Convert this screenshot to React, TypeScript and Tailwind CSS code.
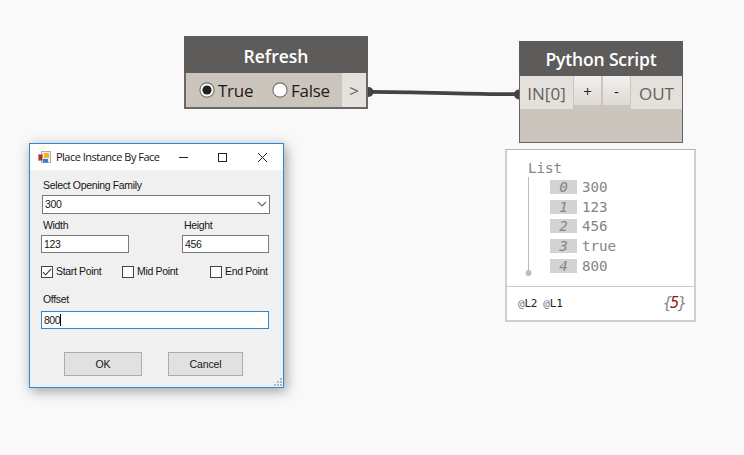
import React from "react";

const sans = "font-['Open_Sans','Noto_Sans',sans-serif]";
const mono = "font-['DejaVu_Sans_Mono',monospace]";

function Radio({ label, checked, className }: { label: string; checked?: boolean; className: string }) {
  return (
    <div className={`flex items-center ${className}`}>
      <svg width="16" height="16" viewBox="0 0 16 16" className="-mt-px shrink-0">
        <circle cx="8" cy="8" r="7.1" fill="#fff" stroke="#707070" strokeWidth="1.1" />
        {checked && <circle cx="8" cy="8" r="4.6" fill="#212121" />}
      </svg>
      <span className="ml-[3px] pt-[2px] text-[17px] leading-5 tracking-[-0.25px] text-[#1b1b1b]">{label}</span>
    </div>
  );
}

function RefreshNode() {
  return (
    <div className={`absolute left-[184px] top-[36px] flex h-[73px] w-[184px] flex-col border-2 border-t-0 border-[#6b6967] bg-[#cbc5bd] ${sans}`}>
      <div className="-mx-0.5 flex h-[37px] shrink-0 items-center justify-center bg-[#5e5c5a] pt-[3px] text-[17.5px] font-semibold text-white">Refresh</div>
      <div className="flex flex-1">
        <Radio label="True" checked className="ml-[13px] w-[73px]" />
        <Radio label="False" className="w-[70px]" />
        <div className="flex flex-1 items-center justify-center bg-[#e4e0dc] pt-0.5 text-[17px] leading-5 text-[#65625f]">&gt;</div>
      </div>
    </div>
  );
}

function PythonNode() {
  const button = "flex h-[29px] w-[27px] justify-center bg-linear-to-b from-[#f2f0ed] to-[#dedad5] pt-[5px] text-[15px] leading-5 text-[#222]";
  return (
    <div className={`absolute left-[519px] top-[41px] flex h-[102px] w-[164px] flex-col border border-t-0 border-[#656361] bg-[#cbc5bd] ${sans}`}>
      <div className="-mx-px flex h-[35px] shrink-0 items-center justify-center bg-[#5e5c5a] pt-[2px] text-[17.5px] font-semibold text-white">
        <span className="tracking-[-0.15px]">Python Script</span>
      </div>
      <div className="flex text-[17px] text-[#65625f]">
        <div className="flex h-[33px] w-[53px] items-center justify-center bg-[#e4e0dc] pt-[2px] leading-5">IN[0]</div>
        <div className={`ml-px ${button}`}>+</div>
        <div className={`ml-[2px] ${button}`}>-</div>
        <div className="ml-px flex h-[33px] flex-1 items-center justify-center bg-[#e4e0dc] pt-[2px] leading-5">OUT</div>
      </div>
    </div>
  );
}

function Preview() {
  return (
    <div className={`absolute left-[505px] top-[149px] flex h-[173px] w-[191px] flex-col border-2 border-t border-[#cfcfcf] border-t-[#b5b5b5] bg-white text-[14.2px] text-[#858585] ${mono}`}>
      <div className="flex h-[136px] flex-col pl-[21px] pt-[8px]">
        <div className="h-[19px] leading-5">List</div>
        <div className="flex">
          <svg width="8" height="102" viewBox="0 0 8 102" className="-ml-[3px]">
            <path d="M3.5 0V96" stroke="#bdbdbd" />
            <circle cx="3.5" cy="96" r="3" fill="#bdbdbd" />
          </svg>
          <div className="ml-[17px] flex flex-col gap-[5.7px] pt-[3px]">
            {["300", "123", "456", "true", "800"].map((value, i) => (
              <div key={i} className="flex h-[14px] items-center">
                <span className="flex h-[14px] w-[27px] items-center justify-center bg-[#d3d3d3] italic leading-none">{i}</span>
                <span className="ml-[5px] leading-none">{value}</span>
              </div>
            ))}
          </div>
        </div>
      </div>
      <div className="flex flex-1 items-center justify-between border-t border-[#c9c9c9] pl-[11px] pr-[9px]">
        <div className="flex gap-[6px] pt-px text-[11px] tracking-[-0.2px] text-[#222]">
          <span><span className="text-[#777]">@</span>L2</span>
          <span><span className="text-[#777]">@</span>L1</span>
        </div>
        <div className="text-[15px] italic tracking-[-1.7px]">{"{"}<span className="text-[#991414]">5</span>{"}"}</div>
      </div>
    </div>
  );
}

function Check({ label, checked, className }: { label: string; checked?: boolean; className: string }) {
  return (
    <div className={`flex items-center whitespace-nowrap ${className}`}>
      <svg width="12" height="12" viewBox="0 0 12 12" className="shrink-0">
        <rect x=".5" y=".5" width="11" height="11" fill="#fff" stroke="#444" />
        {checked && <path d="M2 6.2 4.6 8.8 10 3.2" fill="none" stroke="#333" strokeWidth="1.1" />}
      </svg>
      <span className="-mt-px ml-[3px]">{label}</span>
    </div>
  );
}

function Dialog() {
  const field = "flex items-center border border-[#7a7a7a] bg-white pb-px pl-[2px] tracking-[-0.4px]";
  const button = "flex h-[24px] items-center justify-center border border-[#adadad] bg-[#e1e1e1] pb-px tracking-[-0.1px]";
  return (
    <div className="absolute left-[29px] top-[143px] h-[245px] w-[255px] border border-[#2c88d5] bg-[#f0f0f0] font-['Liberation_Sans',Arial,sans-serif] text-[10.5px] leading-[14px] tracking-[-0.33px] text-[#151515] shadow-[2px_3px_12px_rgba(0,0,0,0.38)]">
      <div className="flex h-[26px] items-center bg-white pl-2">
        <svg width="13" height="13" viewBox="0 0 13 13">
          <rect x="3.5" y=".5" width="9" height="11" fill="#eee" stroke="#aaa" />
          <rect x=".5" y="3.5" width="4" height="6" fill="#b92e22" stroke="#999" strokeWidth=".6" />
          <rect x="6" y="2" width="5" height="5" fill="#f4b61c" />
          <rect x="5" y="8" width="5" height="3.5" fill="#3976dc" />
        </svg>
        <span className={`ml-[5px] w-[120px] whitespace-nowrap text-[11px] tracking-[-0.51px] ${sans}`}>Place Instance By Face</span>
        <svg width="94" height="12" viewBox="0 0 94 12" fill="none" stroke="#222" className="-mt-px ml-[3px]">
          <path d="M0 6.5H9" />
          <rect x="39.5" y="2.5" width="8" height="8" />
          <path d="m79 2 9 9m0-9-9 9" />
        </svg>
      </div>
      <div className="flex flex-col pl-[11px] pr-[14px]">
        <div className="ml-[2px] mt-[8px]">Select Opening Family</div>
        <div className={`mt-[3px] h-[19px] justify-between pr-[2px] ${field} -mr-px ml-px`}>
          300
          <svg width="10" height="8" viewBox="0 0 10 8"><path d="m1 2 4 4 4-4" fill="none" stroke="#666" strokeWidth="1.1" /></svg>
        </div>
        <div className="mt-[4px] flex">
          <div className="w-[88px]">
            <div className="pl-[2px]">Width</div>
            <div className={`mt-[3px] h-[18px] ${field}`}>123</div>
          </div>
          <div className="ml-[53px] w-[87px]">
            <div className="pl-[2px]">Height</div>
            <div className={`mt-[3px] h-[18px] ${field}`}>456</div>
          </div>
        </div>
        <div className="mt-[12px] flex">
          <Check label="Start Point" checked className="w-[81px]" />
          <Check label="Mid Point" className="w-[88px]" />
          <Check label="End Point" className="w-[59px]" />
        </div>
        <div className="ml-[2px] mt-[14px]">Offset</div>
        <div className="mt-[5px] flex h-[18px] items-center border border-[#2c88d5] bg-white pb-px pl-[2px] tracking-[-0.5px]">
          800<span className="h-3 w-px bg-black" />
        </div>
        <div className="ml-[23px] mt-[22px] flex gap-[26px] pt-px">
          <div className={`w-[78px] ${button}`}>OK</div>
          <div className={`w-[75px] ${button}`}>Cancel</div>
        </div>
      </div>
      <svg width="8" height="8" viewBox="0 0 8 8" fill="#b7b7b7" className="absolute bottom-px right-px">
        <path d="M6 0h2v2H6zM3 3h2v2H3zM6 3h2v2H6zM0 6h2v2H0zM3 6h2v2H3zM6 6h2v2H6z" />
      </svg>
    </div>
  );
}

export default function App() {
  return (
    <main className="relative h-[455px] w-[744px] overflow-hidden bg-[#f9f9f9]">
      <svg width="744" height="455" className="absolute inset-0">
        <path d="M368 91.8C420 91.8 470 94.2 519 94.2" fill="none" stroke="#434343" strokeWidth="3.7" />
        <circle cx="368.5" cy="92" r="5" fill="#434343" />
        <circle cx="519" cy="94.5" r="5" fill="#434343" />
      </svg>
      <RefreshNode />
      <PythonNode />
      <Preview />
      <Dialog />
    </main>
  );
}
